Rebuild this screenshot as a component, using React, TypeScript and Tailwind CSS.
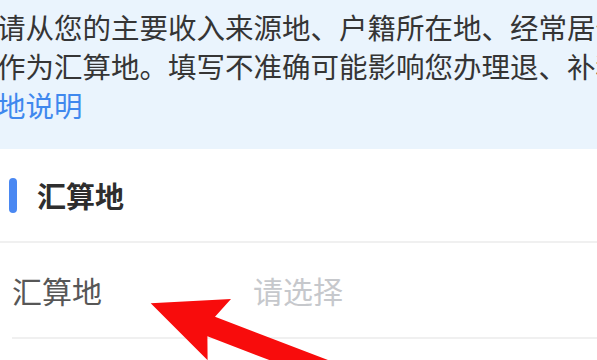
import React from "react";

const Arrow = () => (
  <svg
    className="absolute inset-0 pointer-events-none"
    width="597"
    height="360"
    viewBox="0 0 597 360"
  >
    <polygon
      points="150.7,303.3 231,299 215,316.7 528,436.7 520.5,456.3 207.4,336.3 207.6,360.2"
      fill="#f80c0c"
    />
  </svg>
);

export default function App() {
  return (
    <div className="relative w-full h-[360px] overflow-hidden bg-white font-['Noto_Sans_CJK_SC',sans-serif]">
      {/* notice banner */}
      <div className="bg-[#eaf4fd] h-[149px] pt-[7px] overflow-hidden">
        <div className="ml-[-3px] text-[28.5px] leading-[39px] text-[#353535] whitespace-nowrap">
          <div>请从您的主要收入来源地、户籍所在地、经常居住地中选择一地</div>
          <div>作为汇算地。填写不准确可能影响您办理退、补税，查看汇算</div>
          <div className="text-[#3f88ee]">地说明</div>
        </div>
      </div>

      {/* section header */}
      <div className="h-[94px] flex items-center border-b-2 border-[#f0f0f0]">
        <div className="ml-[9px] w-[8px] h-[35px] rounded-full bg-[#4a88f2]" />
        <span className="ml-5 text-[29px] font-bold text-[#2e2e2e] leading-none">
          汇算地
        </span>
      </div>

      {/* form row */}
      <div className="pl-3">
        <div className="h-[96px] flex items-center border-b-2 border-[#f0f0f0]">
          <span className="w-[241px] text-[30px] text-[#575757] leading-none">汇算地</span>
          <span className="text-[30px] text-[#c6c8cc] leading-none">请选择</span>
        </div>
      </div>

      <Arrow />
    </div>
  );
}
